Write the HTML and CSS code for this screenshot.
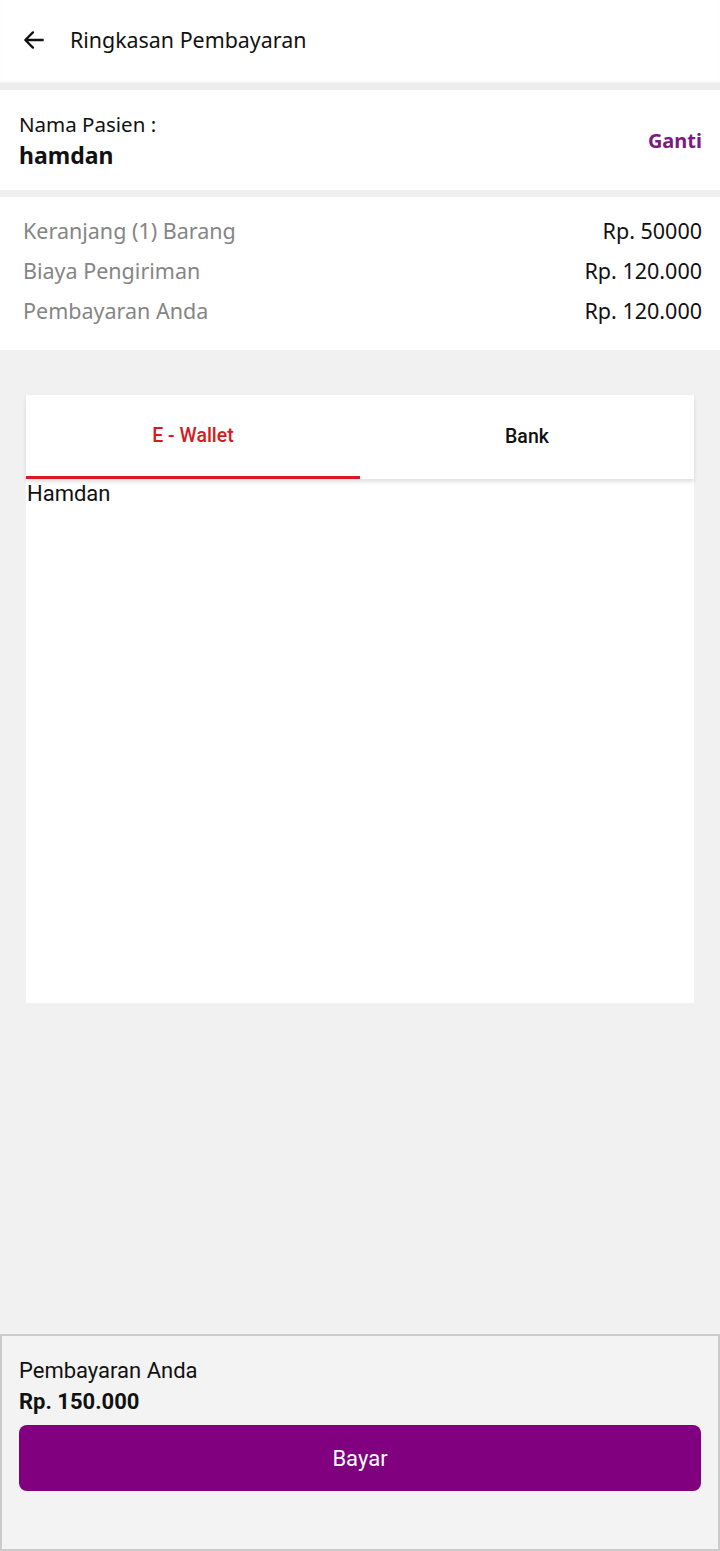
FILE: index.html
```html
<!DOCTYPE html>
<html>
<head>
    <link rel="stylesheet" href="styles.css">
</head>
<body>
    <div class="topbar">
        <svg class="back" width="26" height="26" viewBox="0 0 24 24">
            <path d="M20 12H5M11 5l-7 7 7 7" fill="none" stroke="#111" stroke-width="2.2" stroke-linecap="round" stroke-linejoin="round"/>
        </svg>
        <span class="title">Ringkasan Pembayaran</span>
    </div>

    <div class="patient">
        <div>
            <div class="patient-label">Nama Pasien :</div>
            <div class="patient-name">hamdan</div>
        </div>
        <a class="change">Ganti</a>
    </div>

    <div class="summary">
        <div class="row"><span>Keranjang (1) Barang</span><span class="val">Rp. 50000</span></div>
        <div class="row"><span>Biaya Pengiriman</span><span class="val">Rp. 120.000</span></div>
        <div class="row"><span>Pembayaran Anda</span><span class="val">Rp. 120.000</span></div>
    </div>

    <div class="main">
        <div class="tabs-card">
            <div class="tabs">
                <div class="tab active">E - Wallet</div>
                <div class="tab">Bank</div>
            </div>
            <div class="tab-body">Hamdan</div>
        </div>
    </div>

    <div class="footer">
        <div class="footer-label">Pembayaran Anda</div>
        <div class="footer-total">Rp. 150.000</div>
        <button class="pay">Bayar</button>
    </div>
</body>
</html>
```

FILE: styles.css
```css
body {
    margin: 0;
    width: 720px;
    height: 1551px;
    background-color: #f1f1f1;
    font-family: "Noto Sans", sans-serif;
    color: #111;
    display: flex;
    flex-direction: column;
}
.topbar {
    height: 83px;
    background-color: #fff;
    display: flex;
    align-items: center;
    padding-left: 21px;
    border-bottom: 7px solid #ececec;
    box-shadow: inset 0 -2px 2px rgba(0,0,0,0.04);
}
.back {
    margin-right: 23px;
    margin-top: -3px;
}
.title {
    font-size: 21.4px;
    margin-top: -5px;
}
.patient {
    height: 100px;
    background-color: #fff;
    display: flex;
    align-items: center;
    justify-content: space-between;
    padding: 0 18px 0 19px;
    border-bottom: 7px solid #efefef;
}
.patient-label {
    font-size: 20.5px;
    line-height: 30px;
}
.patient-name {
    font-size: 23px;
    font-weight: bold;
    line-height: 32px;
}
.change {
    color: #7d1a80;
    font-weight: bold;
    font-size: 20px;
}
.summary {
    background-color: #fff;
    padding: 14px 18px 19px 23px;
}
.row {
    display: flex;
    justify-content: space-between;
    font-size: 21.5px;
    line-height: 40px;
    color: #858585;
}
.row .val {
    color: #111;
}
.main {
    flex: 1;
    padding: 45px 26px 0 26px;
}
.tabs-card {
    background-color: #fff;
    height: 608px;
}
.tabs {
    display: flex;
    height: 84px;
    box-shadow: 0 3px 4px rgba(0,0,0,0.12);
    position: relative;
}
.tab {
    flex: 1;
    display: flex;
    align-items: center;
    justify-content: center;
    font-family: Roboto, sans-serif;
    font-size: 19.5px;
    font-weight: 500;
    color: #111;
    padding-bottom: 2px;
}
.tab.active {
    color: #d8191f;
    border-bottom: 3px solid #d8191f;
    padding-bottom: 0;
}
.tab-body {
    font-family: Roboto, sans-serif;
    font-size: 22px;
    padding: 2px 1px;
}
.footer {
    height: 217px;
    box-sizing: border-box;
    border: 2px solid #cbcbcb;
    background-color: #f3f3f3;
    padding: 20px 17px 0 17px;
    font-family: Roboto, sans-serif;
}
.footer-label {
    font-size: 22px;
    line-height: 30px;
}
.footer-total {
    font-size: 22px;
    font-weight: bold;
    line-height: 31px;
}
.pay {
    margin-top: 8px;
    width: 100%;
    height: 66px;
    background-color: #800080;
    color: #fff;
    border: none;
    border-radius: 8px;
    font-family: Roboto, sans-serif;
    font-size: 22px;
}
```
